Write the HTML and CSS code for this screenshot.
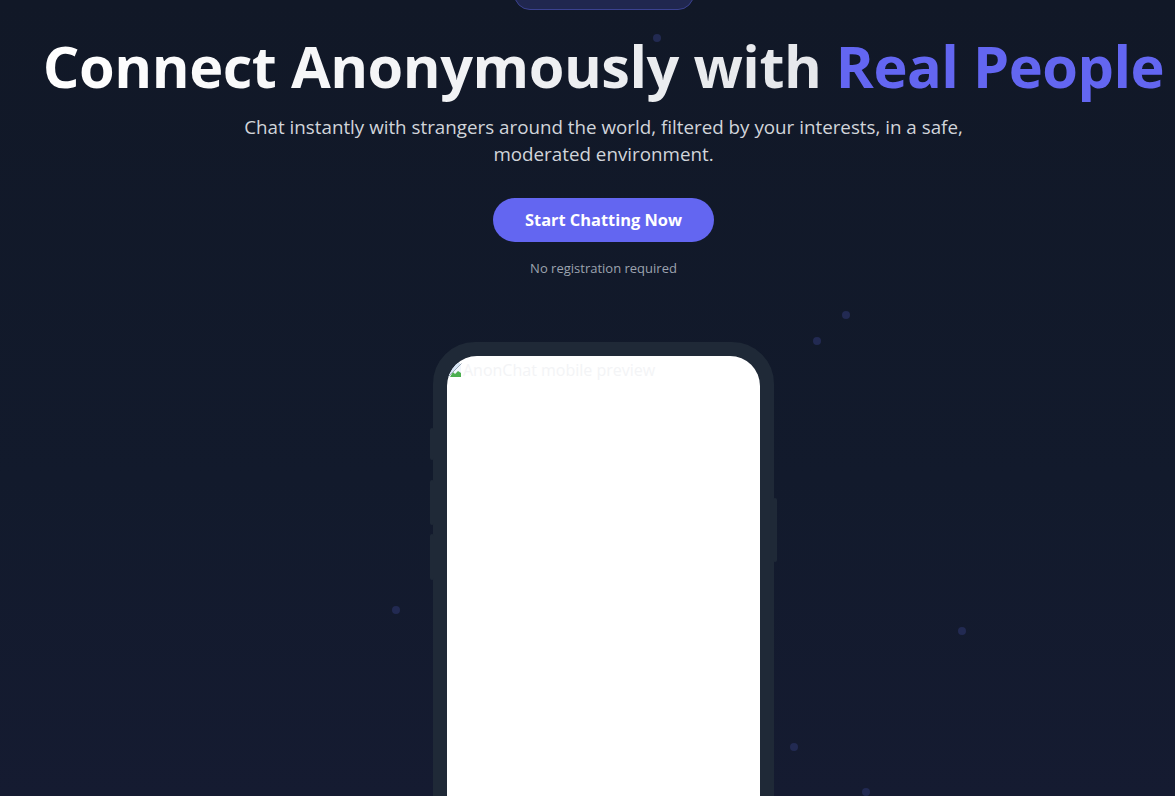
FILE: index.html
```html
<!DOCTYPE html>
<html lang="en">
<head>
<meta charset="utf-8">
<title>AnonChat</title>
<link rel="stylesheet" href="styles.css">
</head>
<body>
<div class="page">
  <span class="dot" style="left:653px;top:34px"></span>
  <span class="dot" style="left:842px;top:311px"></span>
  <span class="dot" style="left:813px;top:337px"></span>
  <span class="dot" style="left:392px;top:606px"></span>
  <span class="dot" style="left:958px;top:627px"></span>
  <span class="dot" style="left:790px;top:743px"></span>
  <span class="dot" style="left:862px;top:788px"></span>
  <section class="hero">
    <div class="badge">Join thousands chatting right now</div>
    <h1 class="title"><span class="title-main">Connect Anonymously with </span><span class="title-accent">Real People</span></h1>
    <p class="subtitle">Chat instantly with strangers around the world, filtered by your interests, in a safe, moderated environment.</p>
    <a class="cta" href="#">Start Chatting Now</a>
    <p class="note">No registration required</p>
    <div class="phone">
      <span class="btn btn-l1"></span>
      <span class="btn btn-l2"></span>
      <span class="btn btn-l3"></span>
      <span class="btn btn-r1"></span>
      <div class="screen">
        <div class="alt">
          <svg class="broken" width="16" height="16" viewBox="0 0 16 16" aria-hidden="true">
            <path d="M1 15 L1 6 L7 1 L13 1 L13 3 Z" fill="#d6e4f5"/>
            <path d="M1 15 L14 2 L14 15 Z" fill="#e8f0fa" opacity="0.6"/>
            <path d="M3 15 L14 15 L14 11 L11 9 L8 12 L6 10 Z" fill="#4caf50"/>
            <path d="M1.5 14.5 L14.5 1.5" stroke="#9aa7b5" stroke-width="1"/>
          </svg>
          <span>AnonChat mobile preview</span>
        </div>
      </div>
    </div>
  </section>
</div>
</body>
</html>
```

FILE: styles.css
```css
html, body {
  margin: 0;
  padding: 0;
}
body {
  background: linear-gradient(180deg, #111827 0%, #121a2c 60%, #151b31 100%);
  min-height: 796px;
  font-family: "Open Sans", "Noto Sans", sans-serif;
  color: #e5e7eb;
  overflow: hidden;
}
.page {
  position: relative;
  height: 796px;
  overflow: hidden;
}
.dot {
  position: absolute;
  width: 8px;
  height: 8px;
  border-radius: 50%;
  background: #222a52;
}
.hero {
  display: flex;
  flex-direction: column;
  align-items: center;
  padding-left: 32px;
  margin-top: -22px;
}
.badge {
  box-sizing: border-box;
  width: 180px;
  height: 32px;
  border: 1px solid #3b4290;
  background: #20274f;
  border-radius: 999px;
  color: #fff;
  font-size: 12px;
  line-height: 28px;
  text-align: center;
  white-space: nowrap;
  overflow: hidden;
}
.title {
  margin: 20px 0 0;
  font-size: 57.7px;
  line-height: 72px;
  font-weight: 700;
  white-space: nowrap;
  letter-spacing: -0.5px;
}
.title-main {
  background: linear-gradient(90deg, #ffffff, #e5e7eb);
  -webkit-background-clip: text;
  background-clip: text;
  color: transparent;
}
.title-accent {
  color: #6366f1;
}
.subtitle {
  margin: 12px 0 0;
  max-width: 740px;
  text-align: center;
  font-size: 18.8px;
  line-height: 27px;
  color: #d1d5db;
}
.cta {
  margin-top: 30px;
  box-sizing: border-box;
  width: 221px;
  height: 44px;
  border-radius: 999px;
  background: #6366f1;
  color: #fff;
  font-weight: 700;
  font-size: 16.4px;
  line-height: 44px;
  text-align: center;
  text-decoration: none;
}
.note {
  margin: 16px 0 0;
  font-size: 13px;
  line-height: 20px;
  color: #9ca3af;
}
.phone {
  position: relative;
  margin-top: 64px;
  box-sizing: border-box;
  width: 341px;
  height: 700px;
  border: 14px solid #1f2937;
  border-radius: 42px;
  background: #1f2937;
}
.btn {
  position: absolute;
  width: 4px;
  background: #1f2937;
  border-radius: 2px;
}
.btn-l1 { left: -17px; top: 72px; height: 32px; }
.btn-l2 { left: -17px; top: 124px; height: 45px; }
.btn-l3 { left: -17px; top: 178px; height: 46px; }
.btn-r1 { right: -17px; top: 142px; height: 64px; }
.screen {
  height: 100%;
  background: #fff;
  border-radius: 30px;
  overflow: hidden;
}
.alt {
  display: flex;
  align-items: center;
  padding: 5px 0 0 0;
  color: #f3f4f6;
  font-size: 16px;
  line-height: 18px;
}
.broken {
  flex: none;
}
```
